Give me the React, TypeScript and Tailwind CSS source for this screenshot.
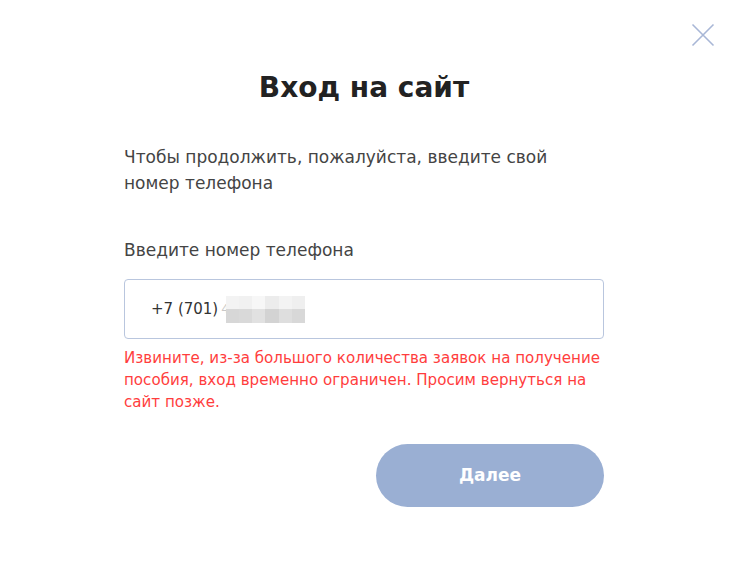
import React from "react";

const font = { fontFamily: "'DejaVu Sans', 'Open Sans', sans-serif" };

export default function App() {
  const top = ["#f3f3f3", "#f1f1f1", "#f7f7f7", "#ececec", "#f3f3f3", "#efefef"];
  const bottom = ["#d7d7d7", "#d9d9d9", "#e1e1e1", "#d3d3d3", "#dedede", "#d8d8d8"];
  return (
    <div className="w-[740px] h-[574px] bg-white relative text-[#333]" style={font}>
      <button className="absolute left-[690px] top-[22px] w-[26px] h-[26px] flex items-center justify-center">
        <svg width="24" height="24" viewBox="0 0 24 24" fill="none" stroke="#a8b7d6" strokeWidth="1.6">
          <path d="M1.5 1.5 L22.5 22.5 M22.5 1.5 L1.5 22.5" />
        </svg>
      </button>
      <div className="flex flex-col pt-[66px] pl-[124px] w-[604px]">
        <h1 className="text-center text-[28px] font-bold leading-[44px] text-[#222]">Вход на сайт</h1>
        <p className="mt-[34px] text-[17px] leading-[26px] text-[#444] whitespace-nowrap">
          Чтобы продолжить, пожалуйста, введите свой
          <br />
          номер телефона
        </p>
        <label className="mt-[41px] text-[17px] leading-[26px] text-[#444]">Введите номер телефона</label>
        <div className="mt-[16px] h-[60px] w-[480px] border-[1.5px] border-[#b9c6de] rounded-[4px] flex items-center pl-[26px] text-[15px] text-[#333]">
          <span className="mr-[3px]">+7 (701)</span>
          <span className="text-[#c8c8c8] text-[13px]">4</span>
          <div className="flex flex-col -ml-[4px]">
            <div className="flex">
              {top.map((c, i) => (
                <div key={i} className="w-[13.3px] h-[13.5px]" style={{ background: c }} />
              ))}
            </div>
            <div className="flex">
              {bottom.map((c, i) => (
                <div key={i} className="w-[13.3px] h-[13.5px]" style={{ background: c }} />
              ))}
            </div>
          </div>
        </div>
        <p className="mt-[8px] text-[15.1px] leading-[22px] text-[#ff3d3d] whitespace-nowrap">
          Извините, из-за большого количества заявок на получение
          <br />
          пособия, вход временно ограничен. Просим вернуться на
          <br />
          сайт позже.
        </p>
        <div className="flex justify-end mt-[31px]">
          <button className="w-[228px] h-[63px] rounded-full bg-[#9aafd3] text-white font-bold text-[17px]">
            Далее
          </button>
        </div>
      </div>
    </div>
  );
}
